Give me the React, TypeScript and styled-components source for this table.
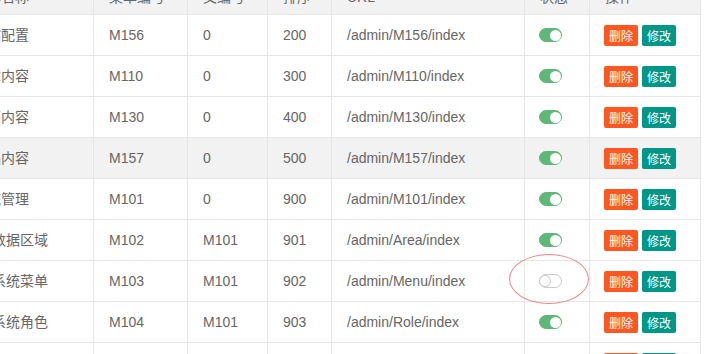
import styled, { createGlobalStyle } from 'styled-components';

const GlobalStyle = createGlobalStyle`
  html, body {
    margin: 0;
    padding: 0;
    background: #fff;
    overflow: hidden;
  }
  body {
    width: 707px;
    height: 354px;
    font-family: "Liberation Sans", "Noto Sans CJK SC", Arial, sans-serif;
  }
`;

const Viewport = styled.div`
  width: 707px;
  height: 354px;
  overflow: hidden;
`;

// the page is scrolled a little: the name column and the header run off the edge
const Table = styled.table`
  margin: -21px 0 0 -43px;
  border-collapse: collapse;
  table-layout: fixed;
  width: 744px;
  color: #666;
  font-size: 14px;
`;

const Th = styled.th`
  height: 34px;
  padding: 0 15px;
  line-height: 20px;
  background: #f2f2f2;
  border: 1px solid #e6e6e6;
  font-weight: normal;
  text-align: left;
  vertical-align: middle;
  white-space: nowrap;
  overflow: hidden;
`;

const Tr = styled.tr<{ $hover?: boolean }>`
  background: ${(p) => (p.$hover ? '#f2f2f2' : '#fff')};
`;

const Td = styled.td`
  height: 40px;
  padding: 0 15px;
  line-height: 20px;
  border: 1px solid #e6e6e6;
  vertical-align: middle;
  white-space: nowrap;
`;

const Name = styled.span<{ $child?: boolean }>`
  padding-left: ${(p) => (p.$child ? '19px' : '0')};
`;

const SwitchWrap = styled.div`
  position: relative;
  display: flex;
  align-items: center;
  height: 20px;
`;

const Switch = styled.span<{ $on: boolean }>`
  box-sizing: border-box;
  display: inline-flex;
  align-items: center;
  justify-content: ${(p) => (p.$on ? 'flex-end' : 'flex-start')};
  width: 23px;
  height: 14px;
  padding: 0 ${(p) => (p.$on ? '0' : '1px')};
  margin-left: -1px;
  border-radius: 7px;
  background: ${(p) => (p.$on ? '#5fb878' : '#fff')};
  border: 1px solid ${(p) => (p.$on ? '#5fb878' : '#c9c9c9')};
`;

const Knob = styled.span<{ $on: boolean }>`
  box-sizing: border-box;
  width: ${(p) => (p.$on ? '11px' : '12px')};
  height: ${(p) => (p.$on ? '11px' : '12px')};
  margin-left: ${(p) => (p.$on ? '0' : '-2px')};
  border-radius: 50%;
  background: #fff;
  border: ${(p) => (p.$on ? 'none' : '1px solid #c9c9c9')};
`;

// hand-drawn red ring from the screenshot, lies over the cell
const Mark = styled.span`
  position: absolute;
  left: -31px;
  top: -17px;
  width: 78px;
  height: 48px;
  border: 1px solid rgba(230, 110, 110, 0.85);
  border-radius: 50%;
  pointer-events: none;
`;

const Actions = styled.div`
  display: flex;
  align-items: center;
  gap: 4px;
  height: 20px;
  margin-left: -1px;
`;

const Btn = styled.button<{ $danger?: boolean }>`
  flex: none;
  height: 21px;
  width: 34px;
  padding: 0;
  border: none;
  border-radius: 2px;
  background: ${(p) => (p.$danger ? '#ff5722' : '#009688')};
  color: #fff;
  font-size: 12px;
  line-height: 21px;
  font-family: "Noto Sans CJK SC", sans-serif;
  cursor: pointer;
`;

type Row = {
  name: string;
  child?: boolean;
  code: string;
  parent: string;
  sort: string;
  url: string;
  on: boolean;
  hover?: boolean;
  marked?: boolean;
};

const rows: Row[] = [
  { name: '网站配置', code: 'M156', parent: '0', sort: '200', url: '/admin/M156/index', on: true },
  { name: '文章内容', code: 'M110', parent: '0', sort: '300', url: '/admin/M110/index', on: true },
  { name: '单页内容', code: 'M130', parent: '0', sort: '400', url: '/admin/M130/index', on: true },
  { name: '产品内容', code: 'M157', parent: '0', sort: '500', url: '/admin/M157/index', on: true, hover: true },
  { name: '系统管理', code: 'M101', parent: '0', sort: '900', url: '/admin/M101/index', on: true },
  { name: '数据区域', child: true, code: 'M102', parent: 'M101', sort: '901', url: '/admin/Area/index', on: true },
  { name: '系统菜单', child: true, code: 'M103', parent: 'M101', sort: '902', url: '/admin/Menu/index', on: false, marked: true },
  { name: '系统角色', child: true, code: 'M104', parent: 'M101', sort: '903', url: '/admin/Role/index', on: true },
  { name: '系统用户', child: true, code: 'M105', parent: 'M101', sort: '904', url: '/admin/User/index', on: true },
];

export default function App() {
  return (
    <Viewport>
      <GlobalStyle />
      <Table>
        <colgroup>
          <col style={{ width: 136 }} />
          <col style={{ width: 94 }} />
          <col style={{ width: 80 }} />
          <col style={{ width: 64 }} />
          <col style={{ width: 193 }} />
          <col style={{ width: 65 }} />
          <col style={{ width: 111 }} />
        </colgroup>
        <thead>
          <tr>
            <Th>菜单名称</Th>
            <Th>菜单编号</Th>
            <Th>父编号</Th>
            <Th>排序</Th>
            <Th>URL</Th>
            <Th>状态</Th>
            <Th>操作</Th>
          </tr>
        </thead>
        <tbody>
          {rows.map((r) => (
            <Tr key={r.code} $hover={r.hover}>
              <Td>
                <Name $child={r.child}>{r.name}</Name>
              </Td>
              <Td>{r.code}</Td>
              <Td>{r.parent}</Td>
              <Td>{r.sort}</Td>
              <Td>{r.url}</Td>
              <Td>
                <SwitchWrap>
                  <Switch $on={r.on}>
                    <Knob $on={r.on} />
                  </Switch>
                  {r.marked && <Mark />}
                </SwitchWrap>
              </Td>
              <Td>
                <Actions>
                  <Btn $danger>删除</Btn>
                  <Btn>修改</Btn>
                </Actions>
              </Td>
            </Tr>
          ))}
        </tbody>
      </Table>
    </Viewport>
  );
}
